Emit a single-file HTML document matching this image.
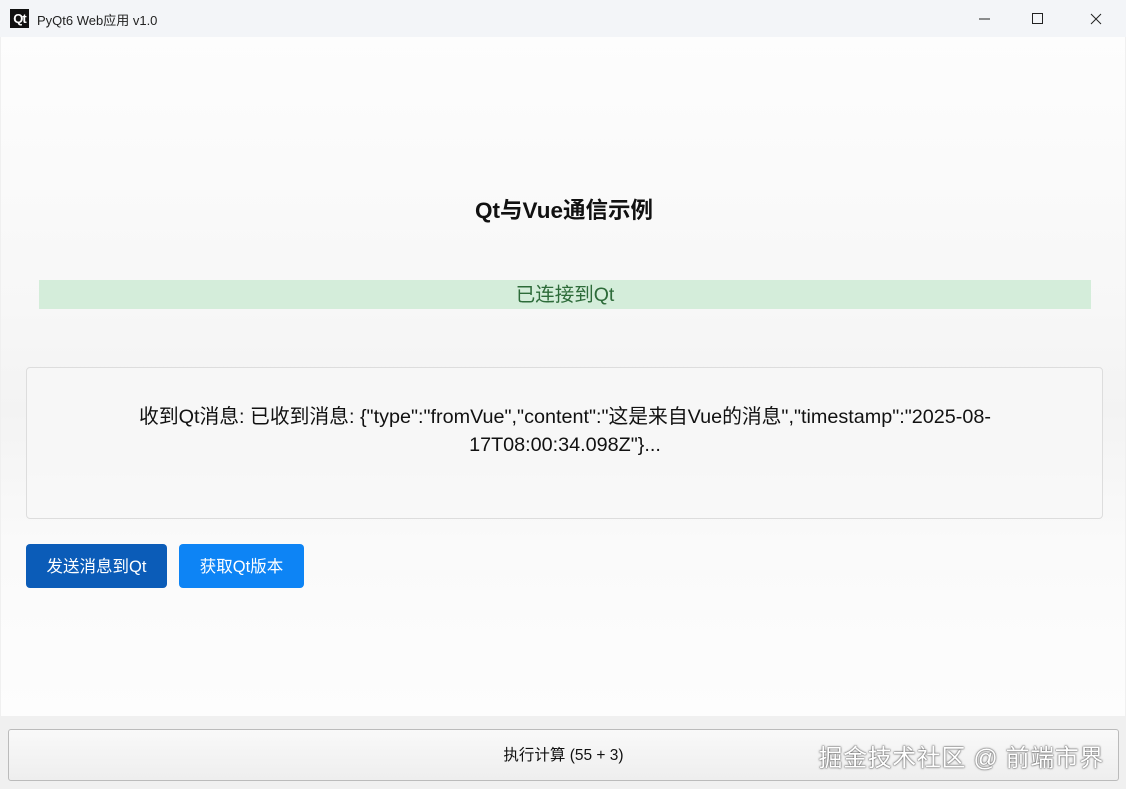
<!DOCTYPE html>
<html><head><meta charset="utf-8"><style>
*{margin:0;padding:0;box-sizing:border-box}
body{width:1126px;height:789px;overflow:hidden;background:#f0f0f0;font-family:"Liberation Sans","Noto Sans CJK SC",sans-serif;position:relative}
.tb{position:absolute;left:0;top:0;width:1126px;height:37px;background:#f3f5f8}
.logo{position:absolute;left:10px;top:9px;width:19px;height:19px;background:#111;color:#fff;font-size:13px;font-weight:bold;line-height:19px;text-align:center;letter-spacing:-1px}
.title{position:absolute;left:37px;top:10px;font-size:13px;color:#222}
.main{position:absolute;left:1px;top:37px;width:1124px;height:679px;background:linear-gradient(180deg,#fdfdfd 0%,#f7f7f7 40%,#f3f3f3 55%,#fafafa 75%,#fdfdfd 100%)}
h1{position:absolute;left:0;width:1128px;top:193px;text-align:center;font-size:22.5px;font-weight:bold;color:#111}
.st{position:absolute;left:39px;top:280px;width:1052px;height:29px;background:#d4edda;color:#2d6b39;font-size:19.5px;text-align:center;line-height:31px}
.box{position:absolute;left:26px;top:367px;width:1077px;height:152px;border:1px solid #ddd;border-radius:4px;background:rgba(248,248,248,.7)}
.msg{position:absolute;left:115px;top:403px;width:900px;text-align:center;font-size:19.8px;line-height:28px;color:#111}
.b{position:absolute;top:544px;height:44px;border-radius:4px;color:#fff;font-size:16.5px;line-height:46px;text-align:center}
.bar{position:absolute;left:8px;top:729px;width:1111px;height:52px;border:1px solid #bbb;border-radius:3px;background:linear-gradient(#f9f9f9,#eee);font-size:15.5px;text-align:center;line-height:52px;color:#111}
.wm{position:absolute;right:22px;top:738px;font-size:24px;color:#fff;text-shadow:0 0 2px #555,0 0 1px #333;letter-spacing:0.6px}
</style></head><body>
<div class="tb"><div class="logo">Qt</div><div class="title">PyQt6 Web应用 v1.0</div>
<svg style="position:absolute;left:960px;top:0" width="166" height="37"><path d="M19 19h11" stroke="#222" stroke-width="1"/><rect x="72.5" y="13.5" width="10" height="10" fill="none" stroke="#222"/><path d="M131 14l10 10M141 14l-10 10" stroke="#222"/></svg></div>
<div class="main"></div>
<h1>Qt与Vue通信示例</h1>
<div class="st">已连接到Qt</div>
<div class="box"></div>
<div class="msg">收到Qt消息: 已收到消息: {"type":"fromVue","content":"这是来自Vue的消息","timestamp":"2025-08-17T08:00:34.098Z"}...</div>
<div class="b" style="left:26px;width:141px;background:#0b5cb8">发送消息到Qt</div>
<div class="b" style="left:179px;width:125px;background:#0d84f5">获取Qt版本</div>
<div class="bar">执行计算 (55 + 3)</div>
<div class="wm">掘金技术社区 @ 前端市界</div>
</body></html>
